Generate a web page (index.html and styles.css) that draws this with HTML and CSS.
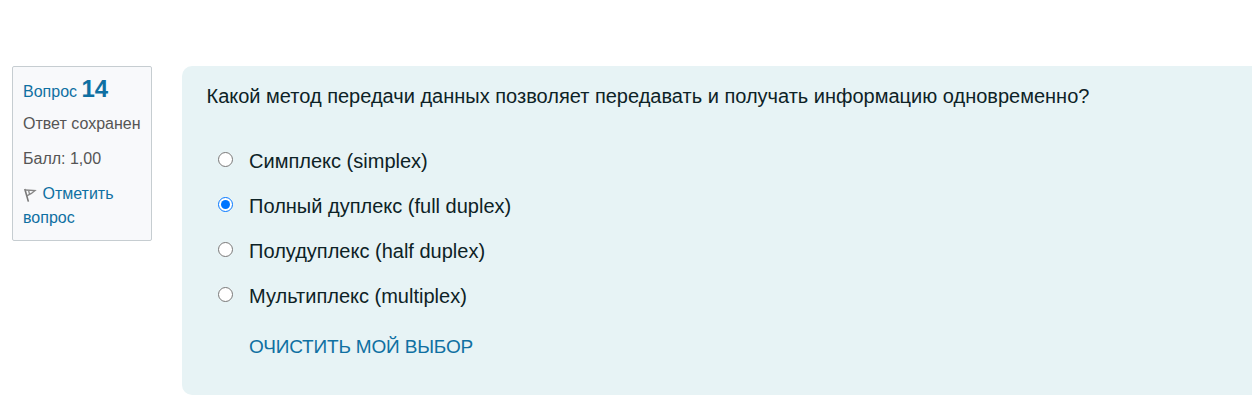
FILE: index.html
```html
<!DOCTYPE html>
<html lang="ru">
<head>
<meta charset="utf-8">
<title>Вопрос 14</title>
<link rel="stylesheet" href="styles.css">
</head>
<body>
<main class="question">
  <aside class="info">
    <h3 class="number">Вопрос <span class="number-value">14</span></h3>
    <div class="state">Ответ сохранен</div>
    <div class="grade">Балл: 1,00</div>
    <a class="flag"><svg class="flag-icon" width="15" height="16" viewBox="0 0 15 16"><path d="M1.8 2L5.4 14.6" fill="none" stroke="#777" stroke-width="1.6"/><path d="M2.2 3L12 3.5L8.4 6.4L3.8 8.8M5.6 3.4L6.4 6.8" fill="none" stroke="#858585" stroke-width="1.3"/></svg> Отметить вопрос</a>
  </aside>
  <section class="content">
    <p class="text">Какой метод передачи данных позволяет передавать и получать информацию одновременно?</p>
    <div class="answers">
      <label class="answer"><input class="radio" type="radio" name="a"><span>Симплекс (simplex)</span></label>
      <label class="answer"><input class="radio" type="radio" name="a" checked><span>Полный дуплекс (full duplex)</span></label>
      <label class="answer"><input class="radio" type="radio" name="a"><span>Полудуплекс (half duplex)</span></label>
      <label class="answer"><input class="radio" type="radio" name="a"><span>Мультиплекс (multiplex)</span></label>
    </div>
    <a class="clear">ОЧИСТИТЬ МОЙ ВЫБОР</a>
  </section>
</main>
</body>
</html>
```
FILE: styles.css
```css
* { box-sizing: border-box; }
body { margin: 0; background: #fff; font-family: "Liberation Sans", Arial, sans-serif; overflow: hidden; }
.question { display: flex; align-items: flex-start; gap: 30px; padding: 66px 0 0 12px; }
.info { width: 140px; height: 175px; flex: none; padding: 7px 0 0 10px; border: 1px solid #c6cdd1; border-radius: 2px; background: #f8f9fb; font-size: 16px; line-height: 24px; color: #555; white-space: nowrap; }
.number { margin: 0; font-size: 16px; line-height: 30px; font-weight: 400; color: #0f70a2; }
.number-value { font-size: 24px; font-weight: 700; }
.state { margin-top: 5px; }
.grade { margin-top: 11px; }
.flag { display: block; margin-top: 11px; width: 110px; color: #0f70a2; white-space: normal; }
.flag-icon { vertical-align: -4px; }
.content { flex: 1; height: 329px; padding: 15px 0 0 24.5px; border-radius: 10px 0 0 10px; background: #e7f3f5; color: #0d2226; font-size: 20px; line-height: 30px; }
.text { margin: 0; white-space: nowrap; }
.answers { padding: 35px 0 0 11px; }
.answer { display: flex; height: 45px; align-items: flex-start; }
.radio { width: 15px; height: 15px; margin: 6px 16.6px 0 0; flex: none; }
.clear { display: block; margin: 6px 0 0 42.5px; color: #0f70a2; font-size: 19px; letter-spacing: -0.17px; }
```
